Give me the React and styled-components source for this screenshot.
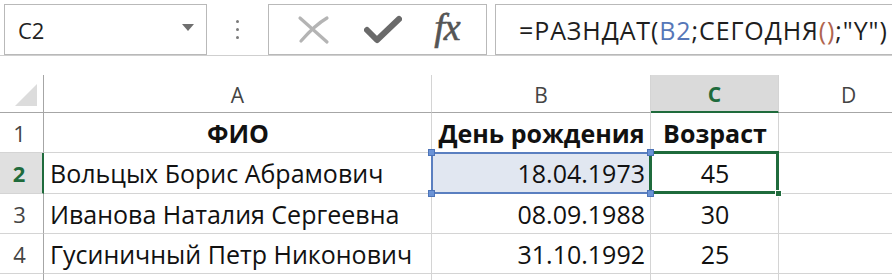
import React from "react";
import styled, { createGlobalStyle } from "styled-components";

// GLOBAL
const GlobalStyle = createGlobalStyle`
  html, body {
    margin: 0;
    padding: 0;
    background: #ffffff;
    overflow: hidden;
  }
  body {
    width: 892px;
    height: 280px;
  }
`;

// STYLE
const Page = styled.div`
  width: 892px;
  height: 280px;
  overflow: hidden;
  background: #ffffff;
  font-family: "Open Sans", "Noto Sans", sans-serif;
`;

const FormulaBar = styled.header`
  height: 56px;
  padding: 4px 0 0 4px;
  box-sizing: border-box;
  display: flex;
  align-items: flex-start;
  border-bottom: 1px solid #cfcfcf;
`;

const NameBox = styled.div`
  width: 203px;
  height: 51px;
  box-sizing: border-box;
  border: 1px solid #b9b9b9;
  display: flex;
  align-items: center;
  justify-content: space-between;
  padding: 0 12px 0 13px;
  font-size: 22px;
  color: #222;
`;

const DropArrow = styled.span`
  width: 0;
  height: 0;
  border-left: 6px solid transparent;
  border-right: 6px solid transparent;
  border-top: 7px solid #6f6f6f;
  margin-bottom: 4px;
`;

const Dots = styled.div`
  width: 61px;
  height: 51px;
  display: flex;
  flex-direction: column;
  align-items: center;
  justify-content: center;
  gap: 5px;

  span {
    width: 3px;
    height: 3px;
    border-radius: 50%;
    background: #7a7a7a;
  }
`;

const IconBox = styled.div`
  width: 219px;
  height: 51px;
  box-sizing: border-box;
  border: 1px solid #b9b9b9;
  display: flex;
  align-items: center;
  justify-content: space-around;
  padding: 0 10px 0 12px;
`;

const Fx = styled.span`
  font-family: "Liberation Serif", "DejaVu Serif", serif;
  font-style: italic;
  font-size: 38px;
  color: #555555;
  letter-spacing: -1px;
  margin-top: -6px;
  -webkit-text-stroke: 0.6px #555555;
`;

const FormulaInput = styled.div`
  flex: 1;
  margin-left: 8px;
  height: 51px;
  box-sizing: border-box;
  border: 1px solid #b9b9b9;
  border-right: none;
  display: flex;
  align-items: center;
  padding-left: 23px;
  font-size: 25px;
  letter-spacing: 0.9px;
  color: #1e1e1e;
  white-space: nowrap;
`;

const Ref = styled.span`
  color: ${p => p.$color};
`;

const Sheet = styled.div`
  margin-top: 19px;
  display: grid;
  grid-template-columns: 44px 388px 219px 128px 140px;
  grid-template-rows: 38px 40px 41px 40px 40px 10px;
`;

const Corner = styled.div`
  border-right: 1px solid #a6a6a6;
  border-bottom: 1px solid #a6a6a6;
  display: flex;
  align-items: flex-end;
  justify-content: flex-end;
  padding: 0 6px 6px 0;

  &::after {
    content: "";
    width: 0;
    height: 0;
    border-left: 22px solid transparent;
    border-bottom: 22px solid #dcdcdc;
  }
`;

const ColHead = styled.div`
  border-right: 1px solid #d4d4d4;
  border-bottom: ${p => (p.$active ? "2px solid #1f6b3c" : "1px solid #a6a6a6")};
  background: ${p => (p.$active ? "#dadada" : "#ffffff")};
  color: ${p => (p.$active ? "#1f6b3c" : "#444444")};
  font-weight: ${p => (p.$active ? 700 : 400)};
  font-size: 21px;
  display: flex;
  align-items: center;
  justify-content: center;
  padding-top: 2px;
`;

const RowHead = styled.div`
  border-right: ${p => (p.$active ? "2px solid #1f6b3c" : "1px solid #a6a6a6")};
  border-bottom: 1px solid #d4d4d4;
  background: ${p => (p.$active ? "#e0e0e0" : "#ffffff")};
  color: ${p => (p.$active ? "#1f6b3c" : "#444444")};
  font-weight: ${p => (p.$active ? 700 : 400)};
  font-size: 22px;
  display: flex;
  align-items: center;
  justify-content: center;
  padding-right: 4px;
`;

const Cell = styled.div`
  position: relative;
  border-right: 1px solid #d4d4d4;
  border-bottom: 1px solid #d4d4d4;
  background: ${p => (p.$range ? "#e1e7f1" : "#ffffff")};
  font-size: 25px;
  font-weight: ${p => (p.$bold ? 700 : 400)};
  color: #111111;
  display: flex;
  align-items: center;
  justify-content: ${p =>
    p.$align === "right" ? "flex-end" : p.$align === "center" ? "center" : "flex-start"};
  padding: 0 5px 0 6px;
  white-space: nowrap;
  overflow: visible;
`;

const RangeFrame = styled.div`
  position: absolute;
  left: -1px;
  top: -1px;
  right: -1px;
  bottom: -1px;
  border: 2px solid #5a7fc0;
  border-right: none;
  pointer-events: none;
`;

const ActiveFrame = styled.div`
  position: absolute;
  left: -2px;
  top: -2px;
  right: -1px;
  bottom: -1px;
  border: 3px solid #1f6b3c;
  pointer-events: none;
`;

const Handle = styled.span`
  position: absolute;
  width: 7px;
  height: 7px;
  box-sizing: border-box;
  background: ${p => p.$fill};
  border: 1px solid ${p => p.$edge};
  ${p => (p.$top ? "top: -4px;" : "bottom: -4px;")}
  ${p => (p.$left ? "left: -4px;" : "right: -4px;")}
  z-index: 2;
`;

// DATA
const rows = [
  { n: 1, a: "ФИО", b: "День рождения", c: "Возраст", head: true },
  { n: 2, a: "Вольцых Борис Абрамович", b: "18.04.1973", c: "45", active: true },
  { n: 3, a: "Иванова Наталия Сергеевна", b: "08.09.1988", c: "30" },
  { n: 4, a: "Гусиничный Петр Никонович", b: "31.10.1992", c: "25" },
];

// ICONS
const CancelIcon = () => (
  <svg width="34" height="30" viewBox="0 0 34 30">
    <path d="M3 3 L30 27" stroke="#b4b4b4" strokeWidth="3.2" strokeLinecap="round" fill="none" />
    <path d="M30 3 Q18 10 4 26" stroke="#b4b4b4" strokeWidth="3.2" strokeLinecap="round" fill="none" />
  </svg>
);

const CheckIcon = () => (
  <svg width="38" height="30" viewBox="0 0 38 30">
    <path d="M3 15 L13 25 L35 4" stroke="#6a6a6a" strokeWidth="6" strokeLinejoin="round" strokeLinecap="round" fill="none" />
  </svg>
);

// COMPONENT
const App = () => {
  return (
    <Page>
      <GlobalStyle />
      <FormulaBar>
        <NameBox>
          C2
          <DropArrow />
        </NameBox>
        <Dots>
          <span />
          <span />
          <span />
        </Dots>
        <IconBox>
          <CancelIcon />
          <CheckIcon />
          <Fx>fx</Fx>
        </IconBox>
        <FormulaInput>
          =РАЗНДАТ(<Ref $color="#5677b8">B2</Ref>;СЕГОДНЯ<Ref $color="#b0654f">()</Ref>;"Y")
        </FormulaInput>
      </FormulaBar>

      <Sheet>
        <Corner />
        <ColHead>A</ColHead>
        <ColHead>B</ColHead>
        <ColHead $active>C</ColHead>
        <ColHead>D</ColHead>

        {rows.map(r => (
          <React.Fragment key={r.n}>
            <RowHead $active={r.active}>{r.n}</RowHead>
            <Cell $bold={r.head} $align={r.head ? "center" : "left"}>{r.a}</Cell>
            <Cell $bold={r.head} $align={r.head ? "center" : "right"} $range={r.active}>
              {r.b}
              {r.active && (
                <>
                  <RangeFrame />
                  <Handle $top $left $fill="#6b93d6" $edge="#4d74b8" />
                  <Handle $top $fill="#6b93d6" $edge="#4d74b8" />
                  <Handle $left $fill="#6b93d6" $edge="#4d74b8" />
                  <Handle $fill="#6b93d6" $edge="#4d74b8" />
                </>
              )}
            </Cell>
            <Cell $bold={r.head} $align="center">
              {r.c}
              {r.active && (
                <>
                  <ActiveFrame />
                  <Handle $fill="#1f6b3c" $edge="#ffffff" />
                </>
              )}
            </Cell>
            <Cell />
          </React.Fragment>
        ))}

        <RowHead />
        <Cell />
        <Cell />
        <Cell />
        <Cell />
      </Sheet>
    </Page>
  );
};

export default App;
